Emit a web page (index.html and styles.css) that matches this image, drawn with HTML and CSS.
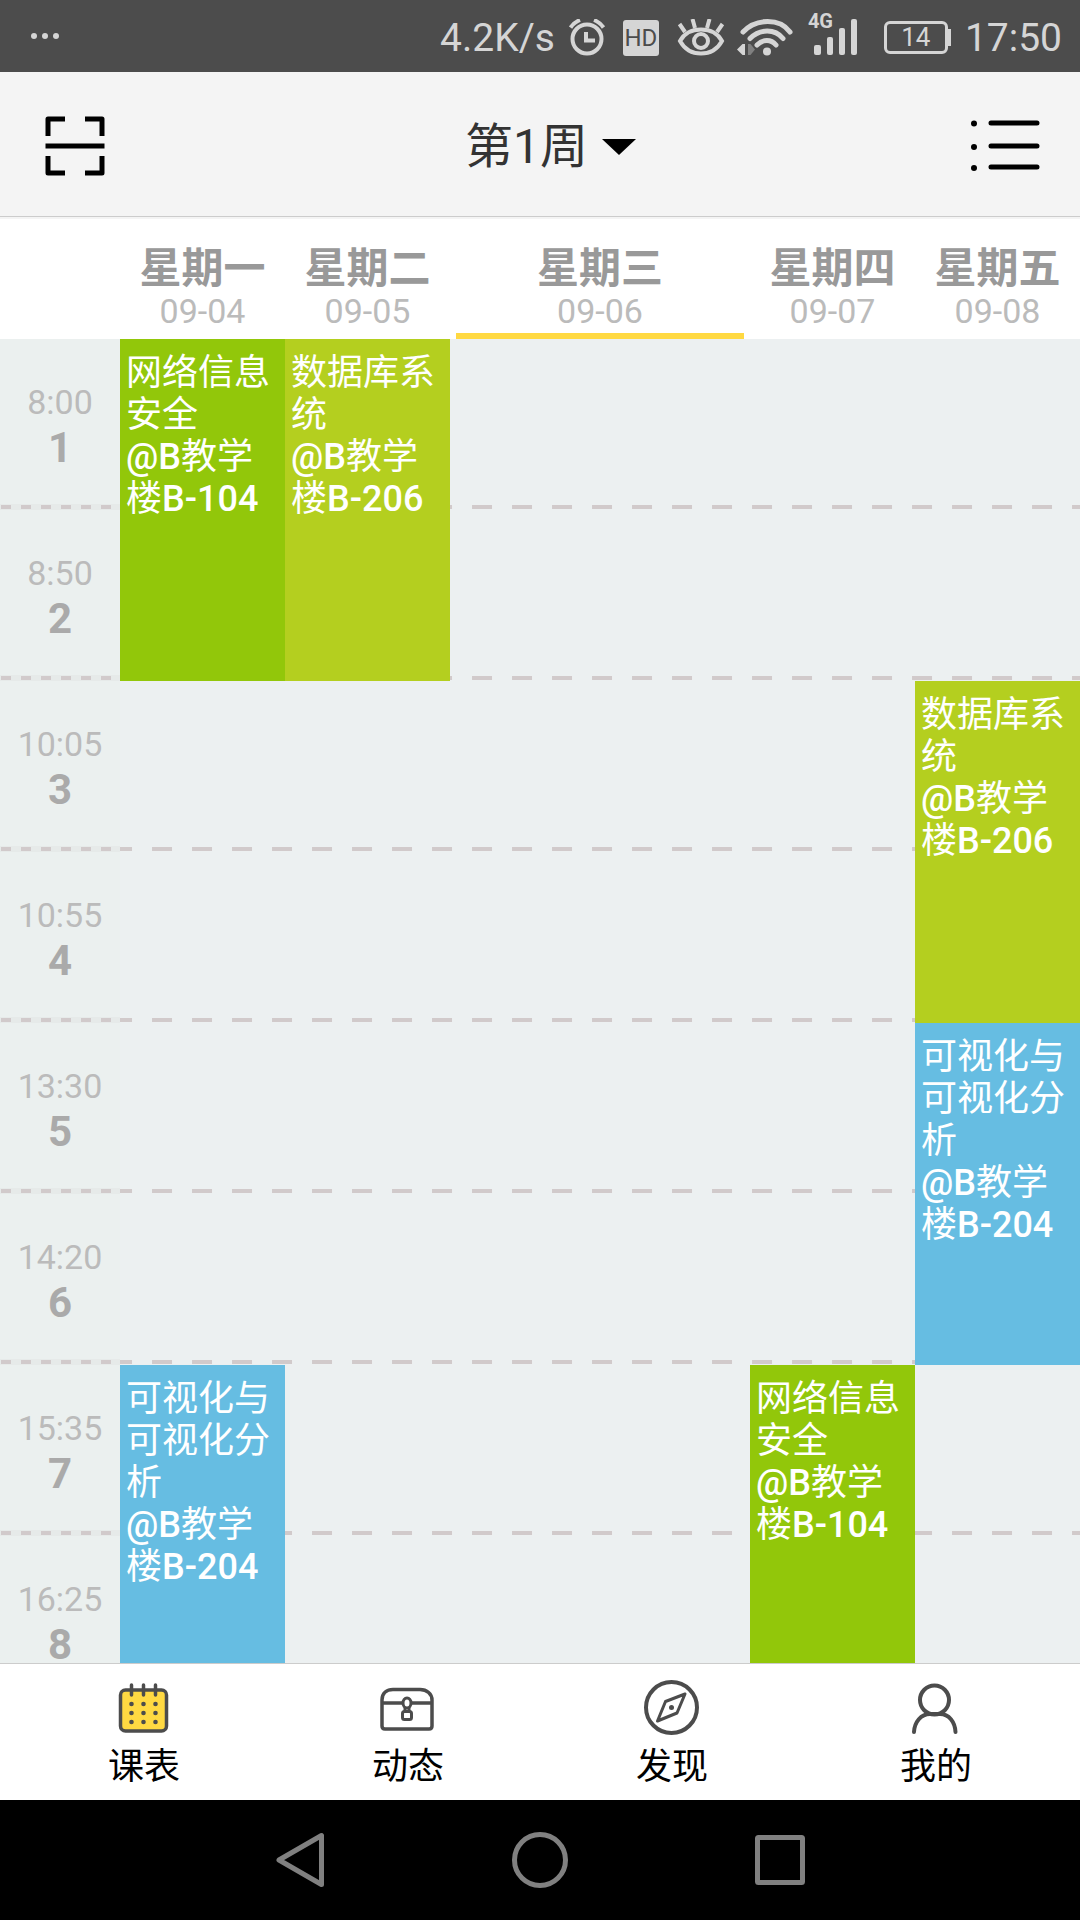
FILE: index.html
```html
<!DOCTYPE html>
<html lang="zh-CN">
<head>
<meta charset="utf-8">
<meta name="viewport" content="width=device-width, initial-scale=1">
<title>课表</title>
<link rel="stylesheet" href="styles.css">
</head>
<body>
<div class="app">
  <div class="status">
    <svg class="status-more" width="28" height="12" viewBox="0 0 28 12" fill="currentColor"><circle cx="3" cy="4" r="3"/><circle cx="14" cy="4" r="3"/><circle cx="25" cy="4" r="3"/></svg>
    <span class="speed">4.2K/s</span>
    <svg width="38" height="38" viewBox="0 0 38 38" fill="none" stroke="currentColor" stroke-width="4"><circle cx="18" cy="20" r="14.5"/><path d="M17 13v8.500h9M1.500 8.500C4 5 7 2.500 11 1M34.500 8.500C32 5 29 2.500 25 1"/></svg>
    <span class="hd">HD</span>
    <svg width="48" height="38" viewBox="0 0 48 38" fill="none" stroke="currentColor" stroke-width="4"><path d="M3 22C8 13 16 10.500 24 10.500S40 13 45 22C40 31 32 34.500 24 34.500S8 31 3 22z"/><circle cx="24" cy="22" r="7"/><path d="M8 13 2.500 5M18 9 15.500 0M30 9 32.500 0M40 13 45.500 5"/></svg>
    <svg class="wifi" width="56" height="38" viewBox="0 0 56 38" fill="none" stroke="currentColor" stroke-width="5" stroke-linecap="round"><path d="M6 13C19 -1 43 -1 53 13M13 19.500C23 9.500 38 9.500 46 19.500M20 26C26 20 34 20 39 26"/><circle cx="30" cy="32.500" r="4" fill="currentColor" stroke="none"/><path d="M8 25v11H5.500L0 30.500 5.500 25z" fill="currentColor" stroke="none"/><path d="M11 25h2.500L18 30.500 13.500 36H11z" fill="#808080" stroke="none"/></svg>
    <span class="signal"><span class="signal-type">4G</span><svg width="44" height="38" viewBox="0 0 44 38" fill="currentColor"><rect x="0" y="26" width="7" height="10" rx="2"/><rect x="13" y="18" width="6" height="18" rx="2"/><rect x="25" y="9" width="6" height="27" rx="2"/><rect x="37" y="0" width="6" height="36" rx="2"/></svg></span>
    <span class="battery">14</span>
    <span class="clock">17:50</span>
  </div>

  <header class="topbar">
    <button class="icon-btn" aria-label="扫一扫"><svg width="60" height="60" viewBox="0 0 60 60" fill="none" stroke="currentColor" stroke-width="5" stroke-linejoin="round"><path d="M3 20V3h17M40 3h17v17M3 40v17h17M40 57h17V40"/><path d="M0.500 30h59"/></svg></button>
    <button class="week">第1周<svg width="34" height="16" viewBox="0 0 34 16"><path d="M0 0h34L17 16z" fill="#000"/></svg></button>
    <button class="icon-btn" aria-label="菜单"><svg width="70" height="54" viewBox="0 0 70 54" fill="none" stroke="currentColor" stroke-width="5" stroke-linecap="round"><path d="M21 4h46M21 27h46M21 48h46"/><g fill="currentColor" stroke="none"><circle cx="4" cy="4.500" r="3"/><circle cx="4" cy="28" r="3"/><circle cx="4" cy="49" r="3"/></g></svg></button>
  </header>

  <main class="schedule" id="schedule">
    <table>
      <colgroup><col class="col-time"><col class="col-day"><col class="col-day"><col class="col-today"><col class="col-day"><col class="col-day"></colgroup>
      <thead>
        <tr>
          <td></td>
          <th scope="col">星期一<span class="date">09-04</span></th>
          <th scope="col">星期二<span class="date">09-05</span></th>
          <th scope="col" class="today">星期三<span class="date">09-06</span></th>
          <th scope="col">星期四<span class="date">09-07</span></th>
          <th scope="col">星期五<span class="date">09-08</span></th>
        </tr>
      </thead>
      <tbody>
        <tr><th scope="row"><span class="time">8:00</span>1</th><td rowspan="2" class="course green">网络信息安全<br><b>@B</b>教学楼<b>B-104</b></td><td rowspan="2" class="course lime">数据库系统<br><b>@B</b>教学楼<b>B-206</b></td><td></td><td></td><td></td></tr>
        <tr><th scope="row"><span class="time">8:50</span>2</th><td></td><td></td><td></td></tr>
        <tr><th scope="row"><span class="time">10:05</span>3</th><td></td><td></td><td></td><td></td><td rowspan="2" class="course lime">数据库系统<br><b>@B</b>教学楼<b>B-206</b></td></tr>
        <tr><th scope="row"><span class="time">10:55</span>4</th><td></td><td></td><td></td><td></td></tr>
        <tr><th scope="row"><span class="time">13:30</span>5</th><td></td><td></td><td></td><td></td><td rowspan="2" class="course blue">可视化与可视化分析<br><b>@B</b>教学楼<b>B-204</b></td></tr>
        <tr><th scope="row"><span class="time">14:20</span>6</th><td></td><td></td><td></td><td></td></tr>
        <tr><th scope="row"><span class="time">15:35</span>7</th><td rowspan="2" class="course blue">可视化与可视化分析<br><b>@B</b>教学楼<b>B-204</b></td><td></td><td></td><td rowspan="2" class="course green">网络信息安全<br><b>@B</b>教学楼<b>B-104</b></td><td></td></tr>
        <tr><th scope="row"><span class="time">16:25</span>8</th><td></td><td></td><td></td></tr>
      </tbody>
    </table>
  </main>

  <nav class="tabs">
    <a href="#schedule"><svg width="56" height="56" viewBox="0 0 56 56" fill="none" stroke="currentColor" stroke-width="3.500" stroke-linecap="round"><rect x="4.500" y="10" width="46" height="41" rx="5" fill="#ffd942"/><path d="M15.500 5v10M27.500 5v10M39.500 5v10"/><g fill="currentColor" stroke="none"><circle cx="15.500" cy="24" r="2.300"/><circle cx="27.500" cy="24" r="2.300"/><circle cx="39.500" cy="24" r="2.300"/><circle cx="15.500" cy="33" r="2.300"/><circle cx="27.500" cy="33" r="2.300"/><circle cx="39.500" cy="33" r="2.300"/><circle cx="15.500" cy="42" r="2.300"/><circle cx="27.500" cy="42" r="2.300"/><circle cx="39.500" cy="42" r="2.300"/></g></svg>课表</a>
    <a href="#feed"><svg width="56" height="56" viewBox="0 0 56 56" fill="none" stroke="currentColor" stroke-width="3.500"><path d="M2 46V20C2 13 7 9.500 13 9.500H40C47 9.500 52 14 52 20V46q0 3-3 3H5q-3 0-3-3z"/><path d="M2 23h21M31 23h21"/><ellipse cx="27" cy="23" rx="4" ry="5" stroke-width="3"/><path d="M25 28v4M29 28v4" stroke-width="3"/><rect x="22.500" y="31.500" width="9" height="8" rx="2" stroke-width="3"/></svg>动态</a>
    <a href="#discover"><svg width="56" height="56" viewBox="0 0 56 56" fill="none" stroke="currentColor" stroke-width="4" stroke-linejoin="round"><circle cx="27.500" cy="27.500" r="25.500"/><path d="M41 14 21.500 21.500 13.500 41 33 33z" stroke-width="3"/><circle cx="27.500" cy="27.500" r="2.500" fill="currentColor" stroke="none"/></svg>发现</a>
    <a href="#me"><svg width="56" height="56" viewBox="0 0 56 56" fill="none" stroke="currentColor" stroke-width="4" stroke-linecap="round"><circle cx="26.500" cy="20" r="14.500"/><path d="M6 52C6.500 42 13 34 22 34H32C41 34 47 42 47.500 52"/></svg>我的</a>
  </nav>

  <div class="sysnav">
    <button aria-label="返回"><svg width="60" height="60" viewBox="0 0 60 60"><path d="M9 30 51.500 5.500V54.500z"/></svg></button>
    <button aria-label="主屏幕"><svg width="60" height="60" viewBox="0 0 60 60"><circle cx="30" cy="30" r="25.500"/></svg></button>
    <button aria-label="最近任务"><svg width="60" height="60" viewBox="0 0 60 60"><rect x="7.500" y="7.500" width="45" height="45" rx="1"/></svg></button>
  </div>
</div>
</body>
</html>
```
FILE: styles.css
```css
* { box-sizing: border-box; }
body {
  margin: 0;
  font-family: Roboto, "Noto Sans CJK SC", sans-serif;
  background: #fff;
}
svg { display: block; flex: none; }
button {
  border: 0;
  padding: 0;
  background: none;
  color: inherit;
  font: inherit;
}
.app {
  display: flex;
  flex-direction: column;
  height: 100vh;
}

/* status bar */
.status {
  display: flex;
  align-items: center;
  flex: none;
  height: 72px;
  padding: 3px 18px 0 31px;
  background: #4c4c4c;
  color: #d5d5d5;
  font-size: 39px;
}
.status-more { margin-right: auto; }
.speed { margin-right: 14px; }
.hd {
  width: 36px;
  margin: 0 18px 0 16px;
  border-radius: 3px;
  background: #d5d5d5;
  color: #4c4c4c;
  font-size: 24px;
  line-height: 36px;
  text-align: center;
}
.wifi { margin-left: 12px; }
.signal {
  position: relative;
  margin: 0 26px 0 21px;
}
.signal-type {
  position: absolute;
  left: -6px;
  top: -8px;
  font-size: 20px;
  font-weight: 700;
  line-height: 20px;
}
.battery {
  position: relative;
  width: 64px;
  margin-right: 17px;
  border: 3px solid;
  border-radius: 6px;
  font-size: 26px;
  line-height: 27px;
  text-align: center;
}
.battery::after {
  content: "";
  position: absolute;
  right: -6px;
  top: 5px;
  width: 4px;
  height: 17px;
  background: currentColor;
}

/* title bar */
.topbar {
  display: flex;
  align-items: center;
  justify-content: space-between;
  flex: none;
  height: 145px;
  padding: 3px 40px 0 45px;
  border-bottom: 1px solid #ccc;
  background: #f4f4f4;
  color: #000;
}
.week {
  display: flex;
  align-items: center;
  gap: 14px;
  padding: 2px 0 0 26px;
  color: #333;
  font-size: 48px;
  line-height: 56px;
}

/* timetable */
.schedule {
  flex: 1;
  min-height: 0;
  overflow: hidden;
  border-top: 2px solid #f4f4f4;
  border-bottom: 1px solid #ccc;
  background: #ecf0f1;
}
table {
  width: 100%;
  table-layout: fixed;
  border-collapse: collapse;
}
.col-time { width: 11.1111%; }
.col-day { width: 15.2778%; }
.col-today { width: 27.7778%; }
th, td { padding: 0; }
thead tr {
  height: 120px;
  background: #fff;
}
thead th {
  padding-top: 26px;
  color: #999;
  font-size: 42px;
  font-weight: 700;
  line-height: 48px;
  vertical-align: top;
}
.date {
  display: block;
  color: #bbb;
  font-size: 34px;
  font-weight: 400;
  line-height: 36px;
}
.today {
  background: linear-gradient(#ffd942, #ffd942) center bottom / calc(100% - 12px) 6px no-repeat;
}
tbody tr {
  height: 171px;
  background: linear-gradient(90deg, #d1cacb 20px, transparent 20px) 32px calc(100% - 1px) / 40px 4px repeat-x;
}
tbody th {
  background:
    linear-gradient(90deg, #d1cacb 10px, transparent 10px) 1px calc(100% - 1px) / 20px 4px repeat-x,
    linear-gradient(#e6eae9, #e6eae9) bottom / 100% 6px no-repeat,
    #ebf0ef;
  color: #aaa;
  font-size: 42px;
  font-weight: 700;
  line-height: 34px;
}
.time {
  display: block;
  margin-bottom: 12px;
  color: #bbb;
  font-size: 34px;
  font-weight: 400;
}
.course {
  padding: 13px 6px;
  color: #fff;
  font-size: 36px;
  line-height: 42px;
  vertical-align: top;
}
.course b { font-weight: 500; }
.green { background: #92c70a; }
.lime { background: #b4cf1f; }
.blue { background: #66bde2; }

/* bottom tabs */
.tabs {
  display: grid;
  grid-template-columns: repeat(4, 1fr);
  flex: none;
  height: 136px;
  padding: 16px 12px 0;
  background: #fff;
}
.tabs a {
  display: flex;
  flex-direction: column;
  align-items: center;
  gap: 10px;
  color: #000;
  font-size: 36px;
  line-height: 42px;
  text-decoration: none;
}
.tabs svg { color: #4c4c4c; }

/* system navigation */
.sysnav {
  display: flex;
  align-items: center;
  justify-content: center;
  gap: 180px;
  flex: none;
  height: 120px;
  background: #000;
}
.sysnav svg {
  fill: none;
  stroke: #808080;
  stroke-width: 5;
  stroke-linejoin: round;
}
```
